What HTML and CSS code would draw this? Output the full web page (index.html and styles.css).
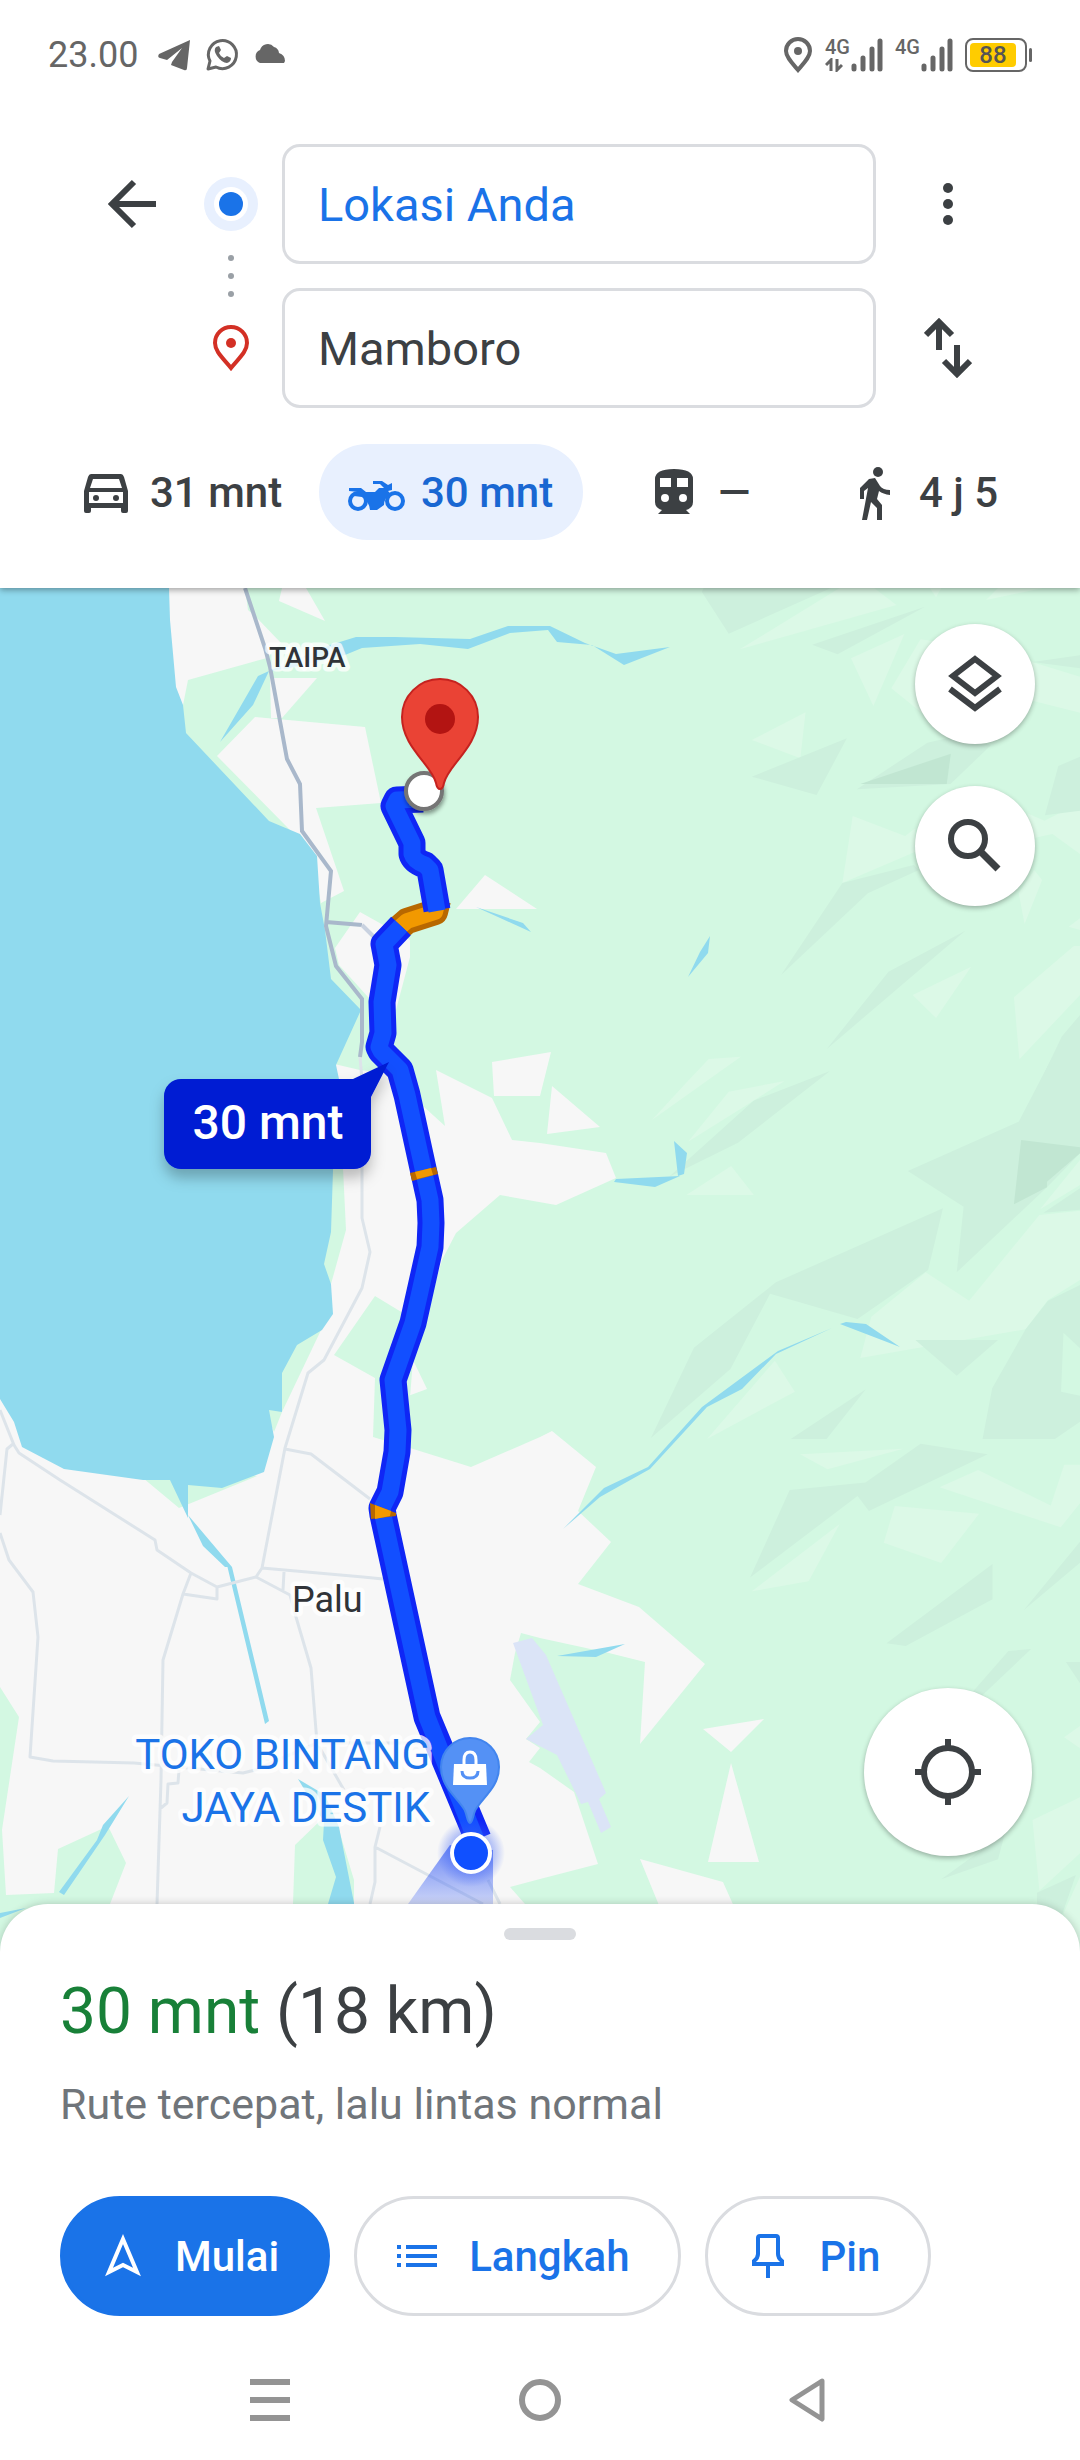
FILE: index.html
```html
<!DOCTYPE html>
<html lang="id">
<head>
<meta charset="utf-8">
<meta name="viewport" content="width=device-width, initial-scale=1">
<title>Rute ke Mamboro</title>
<link rel="stylesheet" href="styles.css">
</head>
<body>
<header class="top">
  <div class="status">
    <div class="status-left">
      <time class="clock">23.00</time>
      <div class="notices">
        <svg width="36" height="36" viewBox="0 0 36 36"><path d="M34 3 L3 17 q-2 3 1 4 l7 2 L26 11 L16 25 l-1 3 l13 5 q3 1 3-2 z" fill="#666"/></svg>
        <svg width="36" height="36" viewBox="0 0 36 36"><path d="M4 32 l2-8 A14 14 0 1 1 12 30 z" fill="none" stroke="#666" stroke-width="3" stroke-linejoin="round"/><path d="M12 10 q-3 3 1 9 q5 7 10 7 q4-1 4-5 l-4-2 l-3 2 q-4-2-5-5 l2-3 l-2-4 z" fill="#666"/></svg>
        <svg width="36" height="36" viewBox="0 0 36 36"><path d="M8 26 a7 7 0 0 1 0-13 a8 8 0 0 1 14-3 a7 7 0 0 1 5 6 q6 2 6 8 l-1 2 z" fill="#666"/></svg>
      </div>
    </div>
    <div class="status-right">
      <svg width="30" height="36" viewBox="0 0 30 36"><path d="M15 33 C9 26 3 20 3 14 a12 12 0 0 1 24 0 C27 20 21 26 15 33z" fill="none" stroke="#666" stroke-width="4"/><circle cx="15" cy="14" r="4" fill="#666"/></svg>
      <div class="network">
        <div class="network-type"><span>4G</span>
          <svg width="18" height="14" viewBox="0 0 18 14"><path d="M6 13V2L1 7M12 1v11l5-5" fill="none" stroke="#666" stroke-width="3"/></svg>
        </div>
        <svg width="32" height="34" viewBox="0 0 32 34"><path d="M3 28v3M12 20v11M21 11v20M29 3v28" stroke="#666" stroke-width="5" stroke-linecap="round"/></svg>
      </div>
      <div class="network">
        <div class="network-type"><span>4G</span></div>
        <svg width="32" height="34" viewBox="0 0 32 34"><path d="M3 28v3M12 20v11M21 11v20M29 3v28" stroke="#666" stroke-width="5" stroke-linecap="round"/></svg>
      </div>
      <div class="battery"><div class="battery-case"><span class="battery-level">88</span></div><span class="battery-tip"></span></div>
    </div>
  </div>

  <form class="trip">
    <button type="button" class="icon-button back" aria-label="Kembali"><svg width="52" height="52" viewBox="0 0 52 52"><path d="M50 26H7M28 4L6 26l22 22" fill="none" stroke="#3c4043" stroke-width="6"/></svg></button>
    <div class="trip-marks">
      <svg width="54" height="54" viewBox="0 0 54 54"><circle cx="27" cy="27" r="27" fill="#e8f0fe"/><circle cx="27" cy="27" r="17" fill="#fff"/><circle cx="27" cy="27" r="12" fill="#1a73e8"/></svg>
      <svg width="6" height="42" viewBox="0 0 6 42" fill="#9aa0a6"><circle cx="3" cy="3" r="3"/><circle cx="3" cy="21" r="3"/><circle cx="3" cy="39" r="3"/></svg>
      <svg width="42" height="54" viewBox="0 0 42 54"><path d="M21 47 C14 38 5 31 5 22 a16 16 0 0 1 32 0 C37 31 28 38 21 47z" fill="none" stroke="#d33025" stroke-width="4"/><circle cx="21" cy="22" r="5" fill="#d33025"/></svg>
    </div>
    <input class="place place-start" type="text" value="Lokasi Anda" aria-label="Titik awal">
    <button type="button" class="icon-button" aria-label="Opsi lainnya"><svg width="12" height="44" viewBox="0 0 12 44" fill="#3c4043"><circle cx="6" cy="6" r="5"/><circle cx="6" cy="22" r="5"/><circle cx="6" cy="38" r="5"/></svg></button>
    <input class="place place-end" type="text" value="Mamboro" aria-label="Tujuan">
    <button type="button" class="icon-button" aria-label="Tukar titik awal dan tujuan"><svg width="48" height="60" viewBox="0 0 48 60" fill="none" stroke="#3c4043" stroke-width="6"><path d="M15 32V5M2 17L15 4l13 13M33 27v28M20 43l13 13 13-13"/></svg></button>
  </form>

  <nav class="modes" aria-label="Moda transportasi">
    <button type="button" class="mode"><svg width="60" height="60" viewBox="0 0 60 60"><path fill="#3c4043" fill-rule="evenodd" d="M15 12h30q2 0 3 3l4 14v20q0 2-2 2h-3q-2 0-2-2v-3H15v3q0 2-2 2h-3q-2 0-2-2V29l4-14q1-3 3-3zM17 17l-3 9h32l-3-9zM13 30v11h34V30z"/><circle cx="20" cy="36" r="3" fill="#3c4043"/><circle cx="40" cy="36" r="3" fill="#3c4043"/></svg>31 mnt</button>
    <button type="button" class="mode mode-on" aria-pressed="true"><svg width="60" height="60" viewBox="0 0 60 60"><g fill="none" stroke="#1a73e8" stroke-width="4"><circle cx="11" cy="39" r="8"/><circle cx="48" cy="39" r="8"/></g><path fill="#1a73e8" d="M2 26h12l5 4h9l4-4h5l-4-4h-7v-3h9l6 4 4-2v7l-4 1 3 3q-7 4-7 11l-7 5H23q-1-9-8-13l-8-1q2-3 5-4l-10-1z"/></svg>30 mnt</button>
    <button type="button" class="mode"><svg width="60" height="60" viewBox="0 0 60 60"><path fill="#3c4043" fill-rule="evenodd" d="M30 7q19 0 19 10v23q0 6-7 8l4 4H14l4-4q-7-2-7-8V17Q11 7 30 7zM16 16v9h11v-9zM33 16v9h11v-9zM21 32a4 4 0 1 0 0 8a4 4 0 1 0 0-8zM39 32a4 4 0 1 0 0 8a4 4 0 1 0 0-8z"/></svg>—</button>
    <button type="button" class="mode"><svg width="60" height="60" viewBox="0 0 60 60"><circle cx="33" cy="10" r="5" fill="#3c4043"/><path d="M24 17l6-1 5 8q3 4 10 4v5q-7-1-11-4l-2 8 5 6v15h-5V46l-6-6-4 18h-5l6-32-4 3v8h-4V26z" fill="#3c4043"/></svg>4 j 5</button>
  </nav>
</header>

<main class="map">
  <svg class="map-art" viewBox="0 588 1080 1372" preserveAspectRatio="xMidYMin slice" role="img" aria-label="Peta rute ke Mamboro">
    <defs>
      <linearGradient id="beam" x1="0" y1="0" x2="0" y2="1"><stop offset="0" stop-color="#3d62f5" stop-opacity=".75"/><stop offset=".6" stop-color="#3d62f5" stop-opacity=".2"/><stop offset="1" stop-color="#3d62f5" stop-opacity=".1"/></linearGradient>
      <radialGradient id="glow"><stop offset=".5" stop-color="#3d62f5" stop-opacity=".5"/><stop offset="1" stop-color="#3d62f5" stop-opacity="0"/></radialGradient>
      <filter id="drop" x="-20%" y="-20%" width="140%" height="160%"><feDropShadow dx="0" dy="9" stdDeviation="7" flood-opacity=".25"/></filter>
      <filter id="small-drop" x="-30%" y="-30%" width="160%" height="170%"><feDropShadow dx="1" dy="3" stdDeviation="2" flood-opacity=".4"/></filter>
    </defs>
    <rect y="588" width="1080" height="1372" fill="#d3f8e2"/>

    <!-- hill shading, north east -->
    <g transform="translate(540 580) scale(.3444 .3333)">
      <g fill="#dcf9e7">
        <path d="M870 24H970L1035 75 580 208zM1132 24H1165L1150 52zM1330 24H1460L1295 60zM903 235L1058 162 968 378zM1105 178L1180 190 1110 400 1020 325zM615 480L771 397 756 535zM908 708L1060 768 1090 745V815L878 909zM1410 240L1568 290V398L1430 362zM1415 700L1465 722 1568 668V822L1488 762 1430 775zM1435 870L1458 900 1407 1032 1390 940zM1535 1040L1568 1015V1050zM1082 1245L1252 1160 1150 1314zM1550 1098H1568V1245L1392 1438 1376 1252z"/>
      </g>
      <g fill="#cdf0dd">
        <path d="M470 36L475 24H845L548 161zM790 194L1118 80 864 223zM1430 246L1568 226V265zM615 590L891 475 803 645zM920 628L1125 488 1200 470 1310 495 1192 612zM1505 558L1568 530V692L1466 706zM700 1185L878 909 1085 855 1100 870 952 940zM832 1408L1012 1175 1235 1052zM1568 1305L1515 1370 1455 1500H1568z"/>
      </g>
      <path d="M930 612L1193 521 1181 612z" fill="#c1e6d2"/>
    </g>
    <!-- hill shading, east -->
    <g transform="translate(540 1060) scale(.3444 .3333)">
      <g fill="#dcf9e7">
        <path d="M430 62L490 -3 583 -10 325 180zM430 245L548 95 710 63 620 122zM425 405L555 318 621 405zM1568 300V375L1452 448zM1450 465L1568 452V660L1475 720 1410 808 930 894 962 770 1120 637 1246 722zM485 1137L682 902 740 995zM755 1183L1055 1166 835 1228zM1160 1282L1272 1230 1483 1337 1522 1214H1568V1330L1512 1402z"/>
      </g>
      <g fill="#cdf0dd">
        <path d="M375 350L620 122 842 33 575 248zM1483 0H1568V280L1472 382 1210 637 1230 440 1068 333 1390 185zM1462 458L1568 385V449zM685 667L1170 445 1127 630 922 777 668 701 553 927 322 1134 447 863zM1090 840H1330L1210 947zM1568 675V1085L1495 1137H1285L1313 985 1410 808 1475 722zM728 1137L946 988 832 1137zM725 1290L945 1268 1105 1151 1300 1183 955 1353 922 1308 610 1553z"/>
      </g>
      <path d="M1397 240L1568 262V280L1472 365V382L1376 433z" fill="#c1e6d2"/>
      <path d="M1520 818L1568 865V1007L1513 995z" fill="#d3f8e2"/>
    </g>
    <!-- hill shading, south east -->
    <g transform="translate(540 1480) scale(.3444 .3333)">
      <path d="M1030 78L1275 101 1165 249 998 188zM870 132L780 304 615 334zM1568 738V805L1522 772zM1430 1020L1568 952V1120L1450 1232zM1568 1190V1400L1520 1300z" fill="#dcf9e7"/>
      <path d="M1568 185V248L1405 390zM1314 252V358L1062 498 1006 490zM1360 513L1426 507 1280 650 1240 655zM1527 546H1568V610zM1165 1198L1350 1060 1330 1138zM1443 1238L1556 1185 1500 1350 1443 1280z" fill="#cdf0dd"/>
    </g>

    <!-- built-up land -->
    <path fill="#f7f7f7" d="M160 588H245L248 610 257 618 281 643 267 658 188 680 183 705 160 690zM282 588H306L325 621 279 601zM270 678H317L282 718H271zM255 717L365 727 381 803 316 808 344 891 321 903 310 850 288 828 217 756zM360 912L410 940V957L396 1010 368 997 339 965 335 948zM485 875L537 909H456zM492 1062L551 1052 540 1096H494zM552 1086L600 1127 547 1134z"/>
    <path fill="#f7f7f7" d="M330 1063L360 1070 400 1075 423 1106 445 1126 436 1070 492 1098 512 1140 540 1143 606 1153 616 1178 556 1205 500 1195 456 1233 442 1260 413 1360 427 1389 408 1396 410 1448 471 1467 540 1437 552 1431 596 1467 578 1511 611 1542 578 1584 639 1607 705 1664 640 1744 645 1662 609 1653 540 1638 521 1633 515 1653 510 1680 540 1722 526 1739 540 1748 529 1762 540 1768 574 1792 598 1864 540 1879 510 1887 525 1904V1960H0V1390H250V1063z"/>
    <path fill="#f7f7f7" d="M703 1729L764 1719 731 1752zM731 1763L759 1862H708zM640 1859L723 1882 740 1920H665z"/>
    <!-- parks and fields -->
    <path fill="#d3f8e2" d="M375 1296L403 1313 413 1360 406 1447 373 1437 375 1378 334 1355zM330 1168H343L346 1230 331 1284 320 1264zM322 1328L282 1412 274 1432 264 1408 278 1370 290 1340zM143 1478L179 1508 257 1476 220 1470zM0 1687L19 1717 2 1830 6 1895 54 1893 58 1849 108 1826 126 1863 110 1904 100 1960H0zM324 1817L295 1845 293 1904V1960H354V1880L339 1830z"/>
    <path fill="#dbe4f7" d="M513 1643L532 1638 546 1655 606 1793 599 1799 611 1827 601 1833 588 1802 581 1804 557 1755 526 1739 543 1725z"/>

    <!-- bay and rivers -->
    <g fill="#90daee">
      <path d="M0 588H169L170 620 176 687 183 705 186 733 269 821 300 834 317 856 320 903 325 930 331 979 361 1010 336 1065 339 1079 333 1170 331 1232 324 1264 331 1284 333 1314 322 1330 297 1345 282 1373V1412L269 1410 274 1437 264 1472 222 1488 188 1485V1518L170 1480H143L64 1469 22 1447 14 1422 0 1399z"/>
      <path d="M188 1515L232 1567H225L203 1546zM227 1565L232 1567 269 1721 265 1724z"/>
      <path d="M129 1796L105 1835 64 1895 59 1892 97 1840 103 1825zM298 1779L325 1795 339 1827 354 1903 352 1960H325L328 1904 336 1877 323 1840 324 1822zM0 1913L26 1908 0 1918z"/>
      <path d="M220 742L258 676 269 671 253 705zM269 671L330 645 356 637H395L470 639 508 626H550L585 643 616 654 670 647 624 665 592 645 557 642 548 630 510 633 468 649 420 644 362 648 345 655 290 668z"/>
      <path d="M476 907L523 923 531 932zM710 936L708 953 688 977 700 952zM674 1141L687 1153 684 1174 678 1176zM614 1182L616 1179 680 1176 655 1187z"/>
      <path d="M840 1324L846 1322 866 1324 900 1347zM832 1328L778 1351 702 1407 648 1467 604 1488 563 1529 600 1497 650 1469 707 1407 742 1389 776 1354zM557 1656L625 1644 596 1657z"/>
    </g>

    <!-- roads -->
    <g fill="none" stroke="#dde4ea" stroke-width="3" stroke-linejoin="round">
      <path d="M360 1057L362 1080V1218L370 1252 362 1288 324 1360 308 1373 285 1448 262 1568 256 1577 217 1587 191 1573 157 1550 155 1540 60 1480 19 1453 14 1445 0 1410M13 1444L7 1449 0 1515M0 1533L9 1560 33 1592 38 1637 30 1757 53 1761 134 1763 243 1773 255 1770 317 1743H420M191 1573L183 1594 163 1660 161 1780 157 1904M183 1594L217 1599V1587M256 1577L290 1595 296 1617 311 1668 317 1743 344 1790M284 1572L283 1590M262 1568L363 1577 383 1579M285 1449L311 1454 370 1499M179 1770L178 1783 168 1784 167 1803 161 1808M380 1827L375 1847V1882L370 1904M375 1847L483 1904M488 1880L500 1904"/>
    </g>
    <path d="M245 588L265 648 270 667 287 759 300 784 302 831 331 871 326 926 336 966 362 999V1042L360 1057M326 922L362 925" fill="none" stroke="#a9b8cb" stroke-width="4"/>
    <path d="M362 925L376 939" fill="none" stroke="#c9d2e0" stroke-width="4"/>

    <!-- place names beneath the route -->
    <g class="map-label">
      <text class="label-district" x="269" y="667">TAIPA</text>
      <text class="label-city" x="292" y="1612">Palu</text>
    </g>

    <!-- route: slow stretches, then the free-flowing ones -->
    <g fill="none" stroke-linejoin="round">
      <path stroke="#b86800" stroke-width="26" d="M438 900L435 912 407 921 399 928"/>
      <path stroke="#f29900" stroke-width="16" d="M438 900L435 912 407 921 399 928"/>
      <path stroke="#0f26f5" stroke-width="27" d="M423 799L397 800 394 806 412 843 412 854Q414 861 425 865L430 870 437 910M401 926L384 944 388 965 382 1002 383 1033 379 1047 381 1051 400 1070 407 1095 424 1173 430 1200 431 1223 430 1247 413 1323 393 1380 398 1430 397 1452 390 1492 382 1508 383 1515 427 1717 478 1839"/>
      <path stroke="#124fff" stroke-width="17" d="M423 799L397 800 394 806 412 843 412 854Q414 861 425 865L430 870 437 911M401 926L384 944 388 965 382 1002 383 1033 379 1047 381 1051 400 1070 407 1095 424 1173 430 1200 431 1223 430 1247 413 1323 393 1380 398 1430 397 1452 390 1492 382 1508 383 1515 427 1717 478 1845"/>
      <path fill="#b86800" d="M410 1173L436 1167 438 1174 412 1181zM370 1503L375 1505 396 1513V1516L371 1519z"/>
      <path fill="#f29900" d="M415 1172L431 1168 433 1175 417 1179zM375 1505L391 1511 390 1516 375 1519z"/>
    </g>

    <!-- destination -->
    <circle cx="424" cy="791" r="18" fill="#fff" stroke="#757575" stroke-width="4" filter="url(#small-drop)"/>
    <path d="M440 789q-3 0-4-6c-4-18-34-36-34-66a38 38 0 0 1 76 0c0 30-30 48-34 66q-1 6-4 6z" fill="#ea4335" stroke="#c5221f" stroke-width="2"/>
    <circle cx="440" cy="719" r="15" fill="#b31412"/>

    <!-- travel time callout -->
    <path d="M181 1079H353L389 1062 371 1097V1152a17 17 0 0 1-17 17H181a17 17 0 0 1-17-17V1096a17 17 0 0 1 17-17z" fill="#051bd3" filter="url(#drop)"/>
    <text class="label-time" x="268" y="1139">30 mnt</text>

    <!-- shop -->
    <g class="map-label">
      <text class="label-shop" x="430" y="1769">TOKO BINTANG</text>
      <text class="label-shop" x="430" y="1822">JAYA DESTIK</text>
    </g>
    <path d="M470 1823c-3 0-3-10-6-14-7-12-23-22-23-42a29 29 0 0 1 58 0c0 20-16 30-23 42-3 4-3 14-6 14z" fill="#5491f5" stroke="#4285ee" stroke-width="2"/>
    <path d="M454 1764h32l1 21h-34z" fill="#fff"/>
    <path d="M464 1765v-5q0-8 6-8t6 8v5" fill="none" stroke="#fff" stroke-width="3"/>
    <path d="M462 1771q0 7 8 7t8-7" fill="none" stroke="#5491f5" stroke-width="3"/>

    <!-- current position -->
    <circle cx="471" cy="1853" r="34" fill="url(#glow)"/>
    <path d="M450 1845L408 1904 380 1950H493V1850z" fill="url(#beam)"/>
    <circle cx="471" cy="1853" r="19" fill="#1050ff" stroke="#fff" stroke-width="4"/>
  </svg>

  <div class="map-tools">
    <button type="button" class="round" aria-label="Lapisan peta"><svg width="56" height="60" viewBox="0 0 56 60" fill="none" stroke="#3c4043" stroke-width="6"><path d="M28 5L50 22 28 39 6 22zM3 35L28 54 53 35"/></svg></button>
    <button type="button" class="round" aria-label="Telusuri di sepanjang rute"><svg width="56" height="56" viewBox="0 0 56 56" fill="none" stroke="#3c4043" stroke-width="6"><circle cx="21" cy="21" r="17"/><path d="M33 33l18 18" stroke-width="7"/></svg></button>
  </div>
  <button type="button" class="round locate" aria-label="Lokasi saya"><svg width="66" height="66" viewBox="0 0 66 66" fill="none" stroke="#3c4043" stroke-width="6"><circle cx="33" cy="33" r="24"/><path d="M33 0v9M33 57v9M0 33h9M57 33h9"/></svg></button>
</main>

<section class="sheet">
  <div class="handle"></div>
  <h1 class="summary"><span class="duration">30 mnt</span> (18 km)</h1>
  <p class="note">Rute tercepat, lalu lintas normal</p>
  <div class="actions">
    <button type="button" class="action action-main"><svg width="60" height="60" viewBox="0 0 60 60"><path d="M30 13L16 46l14-7 14 7z" fill="none" stroke="#fff" stroke-width="4" stroke-linejoin="miter"/></svg>Mulai</button>
    <button type="button" class="action"><svg width="60" height="60" viewBox="0 0 60 60" stroke="#1a73e8" stroke-width="4"><path d="M19 21h31M19 30h31M19 39h31M10 21h4M10 30h4M10 39h4"/></svg>Langkah</button>
    <button type="button" class="action"><svg width="60" height="60" viewBox="0 0 60 60" fill="none" stroke="#1a73e8" stroke-width="4"><path d="M22 10h16q2 0 2 2v16q0 4 4 7v3H16v-3q4-3 4-7V12q0-2 2-2zM30 38v14"/></svg>Pin</button>
  </div>
  <nav class="system" aria-label="Navigasi sistem">
    <button type="button" aria-label="Aplikasi terbaru"><svg width="48" height="48" viewBox="0 0 48 48" stroke="#949494" stroke-width="6"><path d="M4 6h40M4 24h40M4 42h40"/></svg></button>
    <button type="button" aria-label="Beranda"><svg width="48" height="48" viewBox="0 0 48 48"><circle cx="24" cy="24" r="18" fill="none" stroke="#949494" stroke-width="6"/></svg></button>
    <button type="button" aria-label="Kembali"><svg width="48" height="48" viewBox="0 0 48 48"><path d="M36 5L6 24l30 19z" fill="none" stroke="#949494" stroke-width="5" stroke-linejoin="round"/></svg></button>
  </nav>
</section>
</body>
</html>
```

FILE: styles.css
```css
* { box-sizing: border-box; }

body {
  margin: 0;
  min-height: 100vh;
  display: flex;
  flex-direction: column;
  background: #fff;
  color: #3c4043;
  font-family: Roboto, sans-serif;
}

svg { display: block; flex: none; }

button {
  display: flex;
  align-items: center;
  justify-content: center;
  padding: 0;
  border: 0;
  background: none;
  color: inherit;
  font: inherit;
}

/* Header */
.top {
  position: relative;
  z-index: 1;
  padding-bottom: 48px;
  background: #fff;
  box-shadow: 0 2px 6px rgba(0, 0, 0, 0.35);
}

.status {
  display: flex;
  align-items: center;
  justify-content: space-between;
  height: 110px;
  padding: 0 48px;
  color: #666;
}

.status-left { display: flex; align-items: center; gap: 18px; }
.notices { display: flex; gap: 12px; }
.clock { font-size: 36px; line-height: 40px; }

.status-right { display: flex; align-items: center; gap: 12px; }
.network { display: flex; height: 34px; }

.network-type {
  display: flex;
  flex-direction: column;
  justify-content: space-between;
  width: 26px;
  font-size: 20px;
  font-weight: 500;
  line-height: 18px;
}

.battery { display: flex; align-items: center; gap: 2px; }

.battery-case {
  width: 62px;
  height: 34px;
  padding: 3px;
  border: 2px solid #666;
  border-radius: 8px;
}

.battery-level {
  display: block;
  width: 46px;
  height: 24px;
  border-radius: 4px;
  background: #fc0;
  color: #555;
  font-size: 24px;
  font-weight: 500;
  line-height: 24px;
  text-align: center;
}

.battery-tip { width: 3px; height: 14px; border-radius: 2px; background: #666; }

.trip {
  display: grid;
  grid-template-columns: 96px 102px 1fr 144px;
  grid-template-rows: 120px 120px;
  row-gap: 24px;
  padding: 34px 60px 0 84px;
}

.icon-button { width: 100%; }

.trip-marks {
  grid-row: 1 / span 2;
  grid-column: 2;
  display: flex;
  flex-direction: column;
  align-items: center;
  justify-content: center;
  gap: 24px;
}

.place {
  grid-column: 3;
  width: 100%;
  min-width: 0;
  padding: 0 33px;
  border: 3px solid #dadce0;
  border-radius: 18px;
  background: #fff;
  color: #3c4043;
  font-family: inherit;
  font-size: 47px;
}

.place-start { color: #1a73e8; }

.modes {
  display: grid;
  grid-template-columns: 271fr 297fr 201fr 263fr;
  justify-items: start;
  margin-top: 36px;
  padding-left: 48px;
}

.mode {
  height: 96px;
  gap: 14px;
  padding: 0 30px 0 28px;
  border-radius: 48px;
  font-size: 42px;
  font-weight: 500;
  white-space: nowrap;
}

.mode-on { background: #e8f0fe; color: #1967d2; }

/* Map */
.map {
  position: relative;
  flex: 1;
  min-height: 800px;
  overflow: hidden;
}

.map-art {
  position: absolute;
  top: 0;
  left: 0;
  width: 100%;
  height: 100%;
}

.map-label { paint-order: stroke; stroke: rgba(255, 255, 255, 0.75); stroke-width: 9px; stroke-linejoin: round; }
.label-district { font-size: 28px; font-weight: 500; fill: #303338; }
.label-city { font-size: 36px; fill: #303338; }
.label-shop { font-size: 42px; fill: #1a73e8; text-anchor: end; }
.label-time { font-size: 48px; font-weight: 500; fill: #fff; text-anchor: middle; }

.map-tools {
  position: absolute;
  top: 36px;
  right: 45px;
  display: flex;
  flex-direction: column;
  gap: 42px;
}

.round {
  width: 120px;
  height: 120px;
  border-radius: 50%;
  background: #fff;
  box-shadow: 0 2px 5px rgba(0, 0, 0, 0.3);
}

.locate {
  position: absolute;
  right: 48px;
  bottom: 104px;
  width: 168px;
  height: 168px;
}

/* Bottom sheet */
.sheet {
  position: relative;
  margin-top: -56px;
  padding-top: 24px;
  border-radius: 48px 48px 0 0;
  background: #fff;
  box-shadow: 0 0 8px rgba(0, 0, 0, 0.2);
}

.handle {
  width: 72px;
  height: 12px;
  margin: 0 auto 32px;
  border-radius: 6px;
  background: #dadce0;
}

.summary {
  margin: 0 60px 24px;
  font-size: 64px;
  font-weight: 400;
  line-height: 80px;
}

.duration { color: #188038; }

.note {
  margin: 0 60px 64px;
  color: #70757a;
  font-size: 43px;
  line-height: 56px;
}

.actions {
  display: flex;
  gap: 24px;
  padding: 0 60px;
}

.action {
  height: 120px;
  gap: 22px;
  padding: 0 48px 0 30px;
  border: 3px solid #dadce0;
  border-radius: 60px;
  color: #1a73e8;
  font-size: 42px;
  font-weight: 500;
}

.action-main { border-color: #1a73e8; background: #1a73e8; color: #fff; }

.system {
  display: grid;
  grid-template-columns: repeat(3, 1fr);
  height: 120px;
  margin-top: 24px;
  padding: 0 135px;
}
```
